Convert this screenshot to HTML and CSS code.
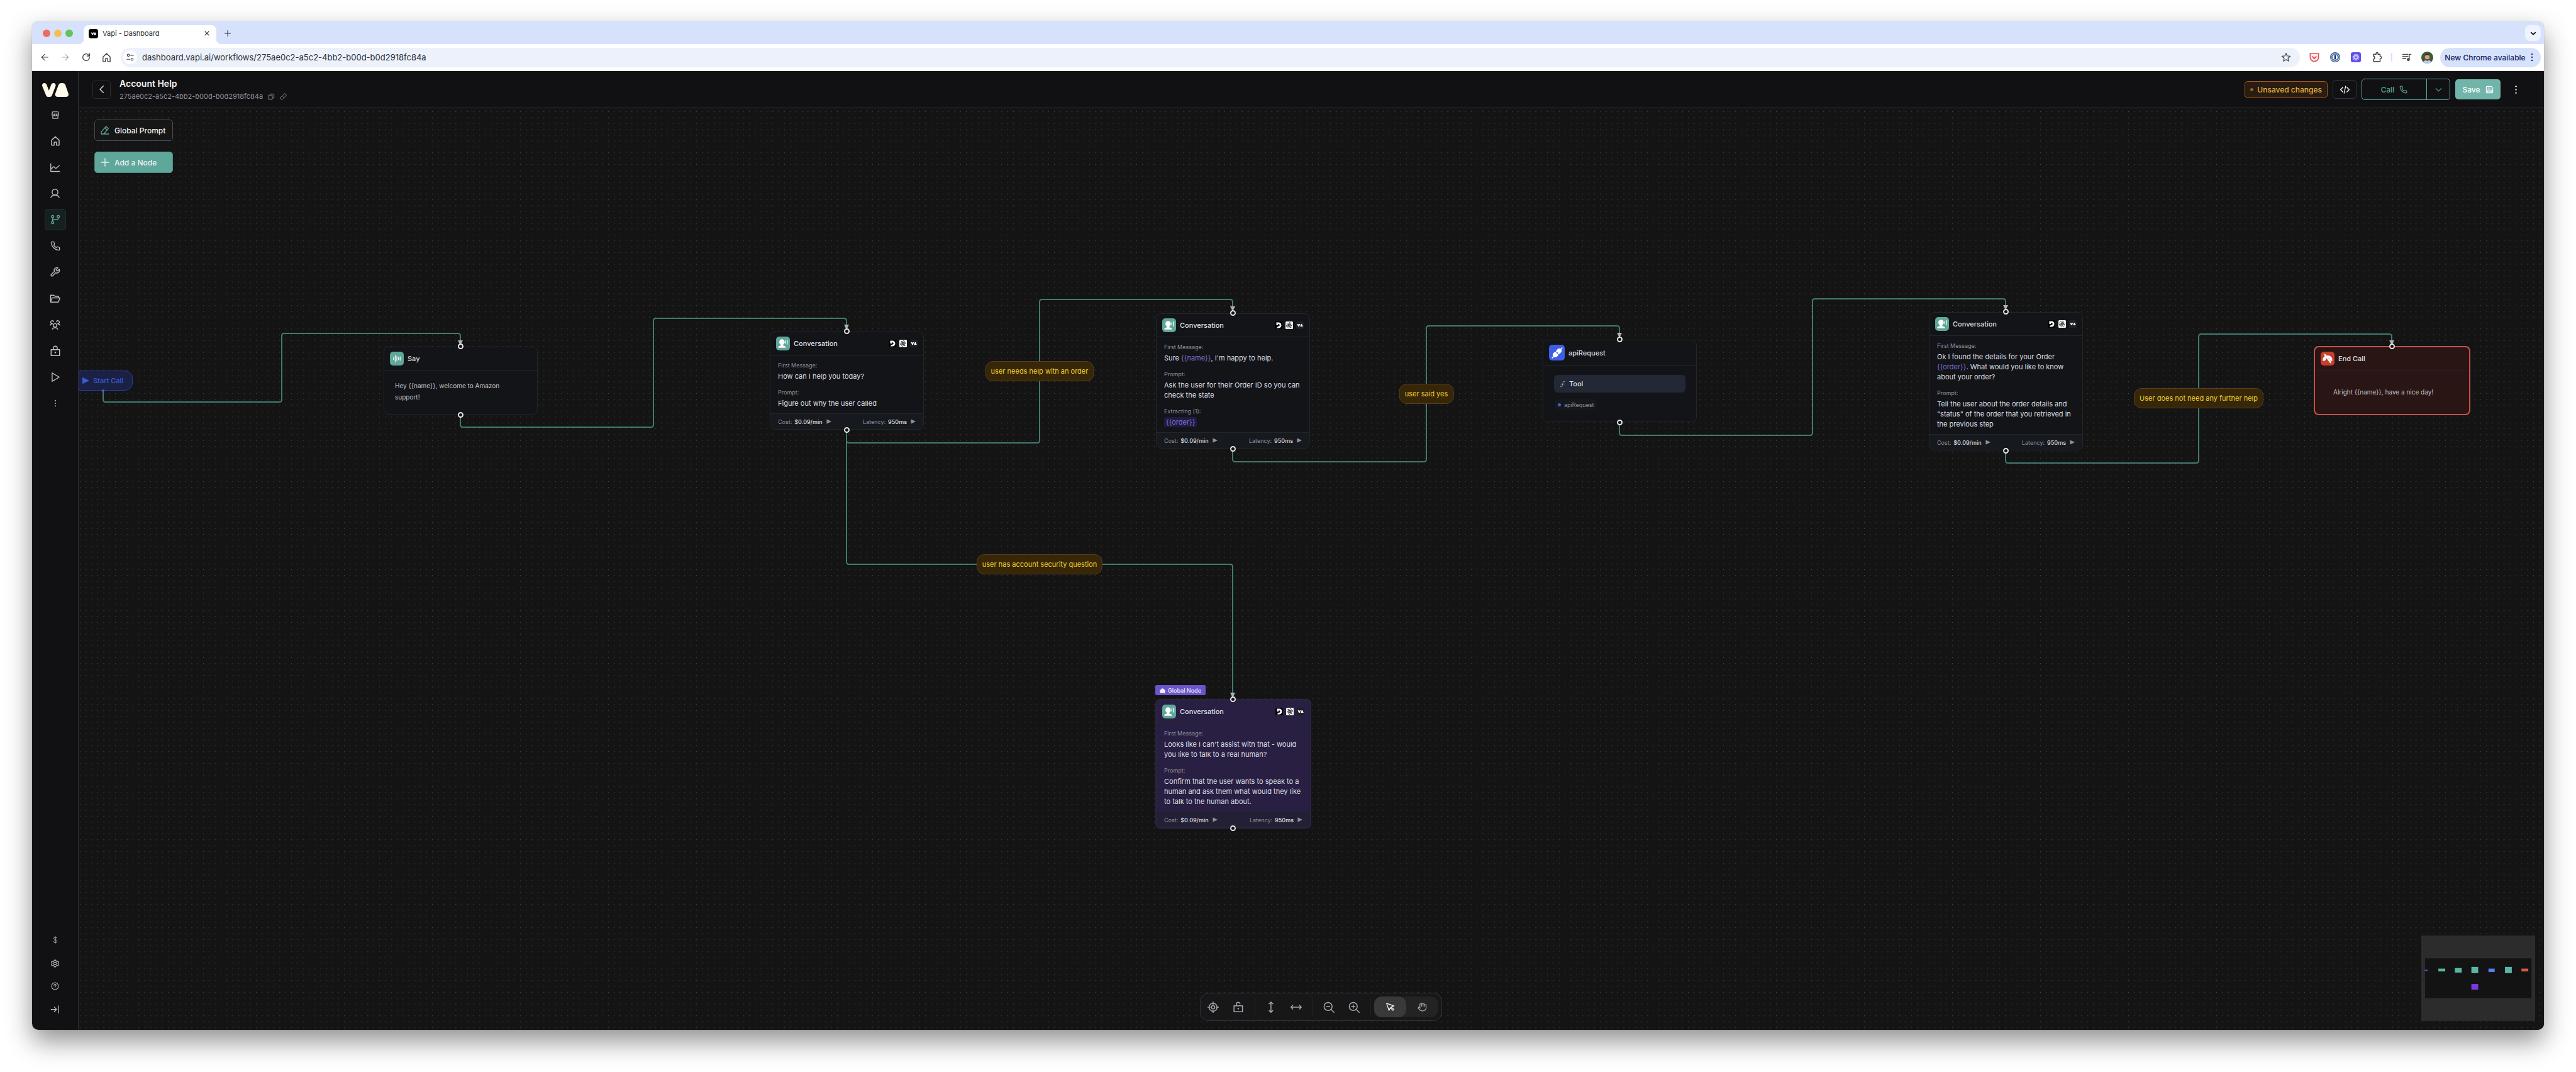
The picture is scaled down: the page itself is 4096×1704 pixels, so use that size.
FILE: index.html
```html
<!DOCTYPE html>
<html lang="en">
<head>
<meta charset="utf-8">
<title>Vapi - Dashboard</title>
<meta name="viewport" content="width=device-width, initial-scale=1">
<link rel="stylesheet" href="styles.css">
</head>
<body>
<svg class="sprite" aria-hidden="true">
  <symbol id="i-back" viewBox="0 0 24 24"><path d="M21 12H4M12 4l-8 8 8 8"/></symbol>
  <symbol id="i-forward" viewBox="0 0 24 24"><path d="M3 12h17M12 4l8 8-8 8"/></symbol>
  <symbol id="i-reload" viewBox="0 0 24 24"><path d="M20 12a8 8 0 1 1-2.5-5.8L20 8.500M20 3v6h-6"/></symbol>
  <symbol id="i-home" viewBox="0 0 24 24"><path d="M4 21V10.500L12 3l8 7.500V21h-5.500v-6.500h-5V21z"/></symbol>
  <symbol id="i-tune" viewBox="0 0 24 24"><circle cx="7" cy="6.500" r="3"/><path d="M13 6.500h8M3 17.500h8"/><circle cx="17" cy="17.500" r="3"/></symbol>
  <symbol id="i-star" viewBox="0 0 24 24"><path d="M12 2.500l2.900 6.400 7 .7-5.300 4.700 1.500 6.900-6.100-3.600-6.100 3.600 1.500-6.900-5.300-4.700 7-.7z"/></symbol>
  <symbol id="i-puzzle" viewBox="0 0 24 24"><path d="M4 5.500h5.500V4a2 2 0 0 1 4 0v1.500H18v5h1a2 2 0 0 1 0 4.500h-1v6H4v-5c3.500 0 3.500-6 0-6z"/></symbol>
  <symbol id="i-queue" viewBox="0 0 24 24"><path d="M2 5h13M2 10h13M2 15h8M18 17V5h4"/><circle cx="15.500" cy="17.500" r="2.500" fill="currentColor"/></symbol>
  <symbol id="i-close" viewBox="0 0 24 24"><path d="M5 5l14 14M19 5L5 19"/></symbol>
  <symbol id="i-plus" viewBox="0 0 24 24"><path d="M12 3v18M3 12h18"/></symbol>
  <symbol id="i-down" viewBox="0 0 24 24"><path d="M4 8.500l8 8 8-8"/></symbol>
  <symbol id="i-left" viewBox="0 0 24 24"><path d="M15.500 4l-8 8 8 8"/></symbol>
  <symbol id="i-dots" viewBox="0 0 24 24"><g fill="currentColor" stroke="none"><circle cx="12" cy="3.500" r="2"/><circle cx="12" cy="12" r="2"/><circle cx="12" cy="20.500" r="2"/></g></symbol>
  <symbol id="i-va" viewBox="0 0 42 22"><g fill="currentColor" stroke="none"><path d="M0 3.600C0 1.500 1.600 0 3.600 0 5.300 0 6.500.9 7.100 2.600L10.800 12 14.400 2.600C15 .9 16.200 0 17.900 0 20.500 0 22.200 2.200 21.400 4.800L15.700 19.400C15 21.200 13.600 22 11.600 22H10.200C8.300 22 6.900 21.200 6.200 19.400L.3 5.200C.1 4.700 0 4.200 0 3.600z"/><path d="M20.900 16.800L26 3C26.800 1 28.500 0 30.800 0H32.200C34.500 0 36.200 1 37 3L41.700 16.800C42.600 19.600 41 22 38 22H24.500C21.600 22 20 19.600 20.900 16.800z"/></g></symbol>
  <symbol id="i-store" viewBox="0 0 24 24"><path d="M3 9l1.500-6h15L21 9M3 9h18M3 9v2a3 3 0 0 0 6 0 3 3 0 0 0 6 0 3 3 0 0 0 6 0V9M5 14v7h14v-7M9 9v2M15 9v2"/></symbol>
  <symbol id="i-chart" viewBox="0 0 24 24"><path d="M2.500 3v17.500h19.500M2.500 16l5.500-5.500c2-2 3 1.500 4.500 2.500s2.500 0 3.500-1l5.500-4.500"/></symbol>
  <symbol id="i-user" viewBox="0 0 24 24"><circle cx="12" cy="9" r="6.500"/><path d="M2.500 21c2-3.500 5-5.500 9.500-5.500s7.500 2 9.500 5.500"/></symbol>
  <symbol id="i-branch" viewBox="0 0 24 24"><circle cx="5.500" cy="5" r="2.800"/><circle cx="5.500" cy="19" r="2.800"/><circle cx="19" cy="5" r="2.800"/><path d="M5.500 8v8M5.500 12h10.500a3 3 0 0 0 3-3V8"/></symbol>
  <symbol id="i-phone" viewBox="0 0 24 24"><path d="M22 16.920v3a2 2 0 0 1-2.180 2 19.790 19.790 0 0 1-8.630-3.070 19.500 19.500 0 0 1-6-6 19.790 19.790 0 0 1-3.070-8.670A2 2 0 0 1 4.110 2h3a2 2 0 0 1 2 1.720 12.840 12.840 0 0 0 .7 2.810 2 2 0 0 1-.45 2.110L8.090 9.910a16 16 0 0 0 6 6l1.270-1.270a2 2 0 0 1 2.110-.45 12.840 12.840 0 0 0 2.810.7A2 2 0 0 1 22 16.920z"/></symbol>
  <symbol id="i-wrench" viewBox="0 0 24 24"><path d="M14.700 6.300a1 1 0 0 0 0 1.400l1.600 1.600a1 1 0 0 0 1.400 0l3.770-3.770a6 6 0 0 1-7.940 7.940l-6.910 6.910a2.120 2.120 0 0 1-3-3l6.910-6.910a6 6 0 0 1 7.940-7.940l-3.760 3.760z"/></symbol>
  <symbol id="i-folder" viewBox="0 0 24 24"><path d="M2 20V4.500h7l3 2.500h8v3.500M2 20l3.500-9.500H23L19.500 20z"/></symbol>
  <symbol id="i-group" viewBox="0 0 24 24"><circle cx="12" cy="13" r="4"/><path d="M6 21.500a7 7 0 0 1 12 0M1 12.500a6 6 0 0 1 5-3 3.500 3.500 0 1 1 3-5M23 12.500a6 6 0 0 0-5-3 3.500 3.500 0 1 0-3-5"/></symbol>
  <symbol id="i-lock" viewBox="0 0 24 24"><path d="M3 9h18v12.500H3zM8 9V5.500a4 4 0 0 1 8 0V9"/><circle cx="12" cy="15" r=".8" fill="currentColor"/></symbol>
  <symbol id="i-unlock" viewBox="0 0 24 24"><path d="M3 9h18v12.500H3zM8 9V5.500a4 4 0 0 1 7.800-1"/><circle cx="12" cy="15" r=".8" fill="currentColor"/></symbol>
  <symbol id="i-play" viewBox="0 0 24 24"><path d="M5.500 2.500l16 9.500-16 9.500z"/></symbol>
  <symbol id="i-tri" viewBox="0 0 24 24"><path fill="currentColor" d="M3 3l19 9-19 9z"/></symbol>
  <symbol id="i-dollar" viewBox="0 0 24 24"><path d="M12 1.500v21M17 7c0-5-10-5-10 0s10 4.500 10 10-10 5-10 0"/></symbol>
  <symbol id="i-gear" viewBox="0 0 24 24"><circle cx="12" cy="12" r="4"/><path d="M10 2h4l1 3 3 1.500 3-1 2 3.500-2.500 3 2.500 3-2 3.500-3-1L15 19l-1 3h-4l-1-3-3-1.500-3 1L1 15l2.500-3L1 9l2-3.500 3 1L9 5z"/></symbol>
  <symbol id="i-help" viewBox="0 0 24 24"><circle cx="12" cy="12" r="10"/><path d="M9 9.500c0-4 6-4 6 0 0 2-3 2-3 4.500M12 17v1"/></symbol>
  <symbol id="i-expand" viewBox="0 0 24 24"><path d="M2 12h14M10 6l6 6-6 6M21 3v18"/></symbol>
  <symbol id="i-copy" viewBox="0 0 24 24"><path d="M3 7h12v15H3zM8 3h13v14h-5"/></symbol>
  <symbol id="i-link" viewBox="0 0 24 24"><path d="M10 13a5 5 0 0 0 7.540.54l3-3a5 5 0 0 0-7.070-7.070l-1.720 1.710M14 11a5 5 0 0 0-7.540-.54l-3 3a5 5 0 0 0 7.070 7.070l1.710-1.710"/></symbol>
  <symbol id="i-code" viewBox="0 0 24 24"><path d="M7 6l-6 6 6 6M17 6l6 6-6 6M14 3l-4 18"/></symbol>
  <symbol id="i-save" viewBox="0 0 24 24"><path d="M2.500 4.500a2 2 0 0 1 2-2h13l4 4v13a2 2 0 0 1-2 2h-15a2 2 0 0 1-2-2zM7 21v-8h10v8M7 7.500h7M10 17h4"/></symbol>
  <symbol id="i-edit" viewBox="0 0 24 24"><path d="M3 21h18M3 21v-5L14.500 3l5.500 5-11 13M11.500 6.500l5.500 5"/></symbol>
  <symbol id="i-wave" viewBox="0 0 24 24"><path d="M3 9v6M7.500 3v18M12 6v12M16.500 9v6M21 7v10"/></symbol>
  <symbol id="i-talk" viewBox="0 0 24 24"><g fill="currentColor" stroke="none"><circle cx="9.500" cy="8.500" r="6.500"/><path d="M6.500 13h6v4l6 2.500V22H.5v-2.500l6-2.500z"/></g><path d="M18.500 5.500v6M22 3.500v10"/></symbol>
  <symbol id="i-plug" viewBox="0 0 24 24"><path d="M1.500 22.500l4-4M22.500 1.500l-4 4M9.500 10.500l2-2M13.500 14.500l2-2"/><g fill="currentColor"><path d="M7.500 10.500l6 6-3 3c-2.500 1.500-5.500.5-6.500-1.500-1-2-.5-3.500.5-4.500z"/><path d="M11 7.500l5.500 5.500 3-3c1.500-2.500.5-5-1-6-2-1-3.500-.5-4.500.5z"/></g></symbol>
  <symbol id="i-hangup" viewBox="0 0 24 24"><path fill="currentColor" stroke="none" d="M.5 16C.5 9 5 4.500 12 4.500S23.500 9 23.500 16c0 1.500-1.500 2-3 1.500l-4-2v-3c-2-2-7-2-9 0v3l-4 2C2 18 .5 17.500.5 16z"/><path class="slash" d="M6 2l14 19"/><path d="M4 2l14.500 20"/></symbol>
  <symbol id="i-func" viewBox="0 0 24 24"><path d="M20 3h-2.500c-2.500 0-3.500 1.500-4 4l-2 10c-.5 2.500-1.500 4-4 4H5M6 12h12"/></symbol>
  <symbol id="i-chip-home" viewBox="0 0 24 24"><path fill="currentColor" d="M2 22V11l10-8 10 8v11z"/></symbol>
  <symbol id="i-locate" viewBox="0 0 24 24"><circle cx="12" cy="12" r="8.500"/><circle cx="12" cy="12" r="3.500"/><path d="M12 .5v5M12 18.500v5M.5 12h5M18.500 12h5"/></symbol>
  <symbol id="i-vert" viewBox="0 0 24 24"><path d="M12 1v22M8 5l4-4 4 4M8 19l4 4 4-4"/></symbol>
  <symbol id="i-horiz" viewBox="0 0 24 24"><path d="M1 12h22M5 8l-4 4 4 4M19 8l4 4-4 4"/></symbol>
  <symbol id="i-zoomout" viewBox="0 0 24 24"><circle cx="10.500" cy="10.500" r="8.500"/><path d="M17 17l6 6M7 10.500h7"/></symbol>
  <symbol id="i-zoomin" viewBox="0 0 24 24"><circle cx="10.500" cy="10.500" r="8.500"/><path d="M17 17l6 6M7 10.500h7M10.500 7v7"/></symbol>
  <symbol id="i-cursor" viewBox="0 0 24 24"><path d="M3 3l6 18 3.500-7 6.500 7 2.500-2.500-7-6 7-3z"/></symbol>
  <symbol id="i-hand" viewBox="0 0 24 24"><path d="M18 11V6a2 2 0 0 0-4 0M14 10V4a2 2 0 0 0-4 0v2M10 10.500V6a2 2 0 0 0-4 0v8M18 8a2 2 0 1 1 4 0v6a8 8 0 0 1-8 8h-2c-2.800 0-4.500-.9-6-2.300l-3.600-3.600a2 2 0 0 1 2.800-2.800L7 15"/></symbol>
  <symbol id="m-deepgram" viewBox="0 0 24 24"><rect width="24" height="24" rx="5" fill="#000"/><path fill="#fff" d="M5 3h7a9 9 0 0 1 0 18H5l5-5.500h2a3.500 3.500 0 0 0 0-7h-2V12H5z"/></symbol>
  <symbol id="m-openai" viewBox="0 0 24 24"><rect width="24" height="24" rx="3" fill="#fff"/><g fill="none" stroke="#111" stroke-width="1.500"><path d="M12 2.500a4.500 4.500 0 0 1 4.500 3v6.500L11 15.200"/><path d="M12 2.500a4.500 4.500 0 0 1 4.500 3v6.500L11 15.200" transform="rotate(60 12 12)"/><path d="M12 2.500a4.500 4.500 0 0 1 4.500 3v6.500L11 15.200" transform="rotate(120 12 12)"/><path d="M12 2.500a4.500 4.500 0 0 1 4.500 3v6.500L11 15.200" transform="rotate(180 12 12)"/><path d="M12 2.500a4.500 4.500 0 0 1 4.500 3v6.500L11 15.200" transform="rotate(240 12 12)"/><path d="M12 2.500a4.500 4.500 0 0 1 4.500 3v6.500L11 15.200" transform="rotate(300 12 12)"/></g></symbol>
  <symbol id="m-vapi" viewBox="0 0 24 24"><rect width="24" height="24" rx="5" fill="#1e2125"/><path fill="#fff" d="M3 8h3.500l1.500 3 1.500-3h3L9.500 16h-3zM12.500 16l3-8h2.500l3.500 8z"/></symbol>
</svg>

<main class="window">
  <div class="tabs">
    <div class="lights"><i class="red"></i><i class="yellow"></i><i class="green"></i></div>
    <div class="tab">
      <span class="favicon"><svg><use href="#i-va"/></svg></span>
      <span class="tab-title">Vapi - Dashboard</span>
      <button class="tab-close" aria-label="Close tab"><svg class="icon s10"><use href="#i-close"/></svg></button>
    </div>
    <button class="tab-new" aria-label="New tab"><svg class="icon s12"><use href="#i-plus"/></svg></button>
    <button class="tab-search" aria-label="Search tabs"><svg class="icon s10 bold"><use href="#i-down"/></svg></button>
  </div>

  <div class="toolbar">
    <button aria-label="Back"><svg class="icon s14"><use href="#i-back"/></svg></button>
    <button aria-label="Forward" class="off"><svg class="icon s14"><use href="#i-forward"/></svg></button>
    <button aria-label="Reload"><svg class="icon s16"><use href="#i-reload"/></svg></button>
    <button aria-label="Home"><svg class="icon s17"><use href="#i-home"/></svg></button>
    <div class="omnibox">
      <button class="site-info" aria-label="Site information"><svg class="icon s14"><use href="#i-tune"/></svg></button>
      <input class="url" aria-label="Address" value="dashboard.vapi.ai/workflows/275ae0c2-a5c2-4bb2-b00d-b0d2918fc84a">
      <button class="fav" aria-label="Bookmark this page"><svg class="icon s16"><use href="#i-star"/></svg></button>
    </div>
    <div class="extensions">
      <button aria-label="Pocket"><svg class="s16 plain" viewBox="0 0 24 24"><path d="M2 3h20v9a10 10 0 0 1-20 0z" fill="#fde8ea" stroke="#e2555f" stroke-width="2.500"/><path d="M7 10l5 5 5-5" fill="none" stroke="#e2555f" stroke-width="3"/></svg></button>
      <button aria-label="1Password"><svg class="s16 plain" viewBox="0 0 24 24"><circle cx="12" cy="12" r="11" fill="#fff" stroke="#555" stroke-width="2"/><circle cx="12" cy="12" r="7.500" fill="#fff" stroke="#3b82e6" stroke-width="3.500"/><path d="M12 7v10" stroke="#222" stroke-width="3.500"/></svg></button>
      <button aria-label="Loom"><svg class="s16 plain" viewBox="0 0 24 24"><rect width="24" height="24" rx="5" fill="#5f50ec"/><path d="M12 4v16M4 12h16M6.300 6.300l11.400 11.400M17.700 6.300L6.300 17.700M8.900 4.600l6.200 14.800M15.100 4.600L8.900 19.400M4.600 8.900l14.800 6.200M19.400 8.900L4.600 15.100" stroke="#fff" stroke-width="1.300"/><circle cx="12" cy="12" r="2.600" fill="#5f50ec"/></svg></button>
      <button aria-label="Extensions"><svg class="icon s18"><use href="#i-puzzle"/></svg></button>
    </div>
    <span class="divider"></span>
    <button class="media" aria-label="Media controls"><svg class="icon s16"><use href="#i-queue"/></svg></button>
    <button class="avatar" aria-label="Profile"><svg viewBox="0 0 20 20"><rect width="20" height="20" fill="#3c5a34"/><path d="M3 20c0-4 3-6 7-6s7 2 7 6z" fill="#b9c9ee"/><ellipse cx="10" cy="9.500" rx="4" ry="5.200" fill="#d3a184"/><path d="M6 11c1 6 7 6 8 0l-2 1.500H8z" fill="#6b4531"/><path d="M5.800 8c0-6 8.400-6 8.400 0l-1-2H7z" fill="#3b2a20"/></svg></button>
    <button class="update">New Chrome available <svg class="icon s14"><use href="#i-dots"/></svg></button>
  </div>

  <div class="app">
    <aside class="sidebar">
      <a class="logo" href="#" aria-label="Vapi"><svg><use href="#i-va"/></svg></a>
      <nav class="nav" aria-label="Main">
        <a href="#" aria-label="Store"><svg class="icon s14"><use href="#i-store"/></svg></a>
        <a href="#" aria-label="Overview"><svg class="icon s18"><use href="#i-home"/></svg></a>
        <a href="#" aria-label="Metrics"><svg class="icon s17"><use href="#i-chart"/></svg></a>
        <a href="#" aria-label="Assistants"><svg class="icon s17"><use href="#i-user"/></svg></a>
        <a href="#" aria-label="Workflows" class="active"><svg class="icon s16"><use href="#i-branch"/></svg></a>
        <a href="#" aria-label="Phone numbers"><svg class="icon s16"><use href="#i-phone"/></svg></a>
        <a href="#" aria-label="Tools"><svg class="icon s17"><use href="#i-wrench"/></svg></a>
        <a href="#" aria-label="Files"><svg class="icon s17"><use href="#i-folder"/></svg></a>
        <a href="#" aria-label="Squads"><svg class="icon s17"><use href="#i-group"/></svg></a>
        <a href="#" aria-label="Keys"><svg class="icon s18"><use href="#i-lock"/></svg></a>
        <a href="#" aria-label="Tests"><svg class="icon s17"><use href="#i-play"/></svg></a>
        <a href="#" aria-label="More"><svg class="icon s12"><use href="#i-dots"/></svg></a>
      </nav>
      <nav class="nav-foot" aria-label="Account">
        <a href="#" aria-label="Billing"><svg class="icon s12"><use href="#i-dollar"/></svg></a>
        <a href="#" aria-label="Settings"><svg class="icon s13"><use href="#i-gear"/></svg></a>
        <a href="#" aria-label="Help"><svg class="icon s13"><use href="#i-help"/></svg></a>
        <a href="#" aria-label="Expand"><svg class="icon s15"><use href="#i-expand"/></svg></a>
      </nav>
    </aside>

    <section class="main">
      <header class="header">
        <button class="back" aria-label="Back to workflows"><svg class="icon s16"><use href="#i-left"/></svg></button>
        <div class="heading">
          <h1>Account Help</h1>
          <p>275ae0c2-a5c2-4bb2-b00d-b0d2918fc84a
            <button aria-label="Copy id"><svg class="icon s11"><use href="#i-copy"/></svg></button>
            <button aria-label="Copy link"><svg class="icon s11"><use href="#i-link"/></svg></button></p>
        </div>
        <div class="actions">
          <span class="unsaved"><i></i>Unsaved changes</span>
          <button class="code" aria-label="View code"><svg class="icon s15"><use href="#i-code"/></svg></button>
          <div class="call">
            <button class="call-main">Call <svg class="icon s13"><use href="#i-phone"/></svg></button>
            <button class="call-more" aria-label="Call options"><svg class="icon s13"><use href="#i-down"/></svg></button>
          </div>
          <button class="save">Save <svg class="icon s13"><use href="#i-save"/></svg></button>
          <button class="more" aria-label="More options"><svg class="icon s15"><use href="#i-dots"/></svg></button>
        </div>
      </header>

      <div class="canvas">
        <svg class="board" aria-hidden="true">
          <defs>
            <pattern id="dots" width="28" height="28" patternUnits="userSpaceOnUse" patternTransform="translate(2 5) scale(.3333)"><rect width="3" height="3" fill="#525252"/></pattern>
          </defs>
          <rect width="100%" height="100%" fill="url(#dots)"/>
          <g class="edges">
            <path d="M39 450V463q0 4 4 4H319q4 0 4-4V362q0-4 4-4H603q4 0 4 4V371"/>
            <path d="M607 490V503q0 4 4 4H910q4 0 4-4V338q0-4 4-4H1217q4 0 4 4V346"/>
            <path d="M1221 514V528q0 4 4 4H1524q4 0 4-4V308q0-4 4-4H1831q4 0 4 4V316"/>
            <path d="M1221 514V721q0 4 4 4H1831q4 0 4 4V931"/>
            <path d="M1835 544V558q0 4 4 4H2139q4 0 4-4V350q0-4 4-4H2446q4 0 4 4V359"/>
            <path d="M2450 502V516q0 4 4 4H2753q4 0 4-4V307q0-4 4-4H3060q4 0 4 4V315"/>
            <path d="M3064 545V560q0 4 4 4H3367q4 0 4-4V363q0-4 4-4H3674q4 0 4 4V370"/>
          </g>
          <g class="arrows">
            <path d="M603 369h8l-4 8zM1217 344h8l-4 8zM1831 315h8l-4 8zM2446 357h8l-4 8zM3060 313h8l-4 8zM3674 369h8l-4 8zM1831 929h8l-4 8z"/>
          </g>
        </svg>

        <div class="panel">
          <button class="global-prompt"><svg class="icon s16"><use href="#i-edit"/></svg>Global Prompt</button>
          <button class="add-node"><svg class="icon s16"><use href="#i-plus"/></svg>Add a Node</button>
        </div>

        <div class="start"><svg class="icon s12"><use href="#i-tri"/></svg>Start Call<i></i></div>

        <article class="node say">
          <i class="port in"></i>
          <header><span class="badge"><svg class="icon s14"><use href="#i-wave"/></svg></span><h2>Say</h2></header>
          <p class="speech">Hey {{name}}, welcome to Amazon<br>support!</p>
          <i class="port out"></i>
        </article>

        <article class="node conv-help">
          <i class="port in"></i>
          <header><span class="badge"><svg class="icon s16"><use href="#i-talk"/></svg></span><h2>Conversation</h2>
            <span class="models"><svg><use href="#m-deepgram"/></svg><svg><use href="#m-openai"/></svg><svg><use href="#m-vapi"/></svg></span></header>
          <dl>
            <dt>First Message:</dt><dd>How can I help you today?</dd>
            <dt>Prompt:</dt><dd>Figure out why the user called</dd>
          </dl>
          <footer><button>Cost: <b>$0.09/min</b><svg class="icon"><use href="#i-tri"/></svg></button><button>Latency: <b>950ms</b><svg class="icon"><use href="#i-tri"/></svg></button></footer>
          <i class="port out"></i>
        </article>

        <article class="node conv-order">
          <i class="port in"></i>
          <header><span class="badge"><svg class="icon s16"><use href="#i-talk"/></svg></span><h2>Conversation</h2>
            <span class="models"><svg><use href="#m-deepgram"/></svg><svg><use href="#m-openai"/></svg><svg><use href="#m-vapi"/></svg></span></header>
          <dl>
            <dt>First Message:</dt><dd>Sure <em>{{name}}</em>, I'm happy to help.</dd>
            <dt>Prompt:</dt><dd>Ask the user for their Order ID so you can<br>check the state</dd>
            <dt>Extracting (1):</dt><dd><em class="chip">{{order}}</em></dd>
          </dl>
          <footer><button>Cost: <b>$0.09/min</b><svg class="icon"><use href="#i-tri"/></svg></button><button>Latency: <b>950ms</b><svg class="icon"><use href="#i-tri"/></svg></button></footer>
          <i class="port out"></i>
        </article>

        <article class="node api">
          <i class="port in"></i>
          <header><span class="badge"><svg class="icon s18"><use href="#i-plug"/></svg></span><h2>apiRequest</h2></header>
          <div class="tool-body">
            <div class="tool"><svg class="icon s11"><use href="#i-func"/></svg>Tool</div>
            <span class="tool-tag"><i></i>apiRequest</span>
          </div>
          <i class="port out"></i>
        </article>

        <article class="node conv-details">
          <i class="port in"></i>
          <header><span class="badge"><svg class="icon s16"><use href="#i-talk"/></svg></span><h2>Conversation</h2>
            <span class="models"><svg><use href="#m-deepgram"/></svg><svg><use href="#m-openai"/></svg><svg><use href="#m-vapi"/></svg></span></header>
          <dl>
            <dt>First Message:</dt><dd>Ok I found the details for your Order<br><em>{{order}}</em>. What would you like to know<br>about your order?</dd>
            <dt>Prompt:</dt><dd>Tell the user about the order details and<br>"status" of the order that you retrieved in<br>the previous step</dd>
          </dl>
          <footer><button>Cost: <b>$0.09/min</b><svg class="icon"><use href="#i-tri"/></svg></button><button>Latency: <b>950ms</b><svg class="icon"><use href="#i-tri"/></svg></button></footer>
          <i class="port out"></i>
        </article>

        <article class="node end">
          <i class="port in"></i>
          <header><span class="badge"><svg class="icon s16"><use href="#i-hangup"/></svg></span><h2>End Call</h2></header>
          <p class="speech">Alright {{name}}, have a nice day!</p>
        </article>

        <article class="node conv-global">
          <span class="global-tag"><svg class="icon s9"><use href="#i-chip-home"/></svg>Global Node</span>
          <i class="port in"></i>
          <header><span class="badge"><svg class="icon s16"><use href="#i-talk"/></svg></span><h2>Conversation</h2>
            <span class="models"><svg><use href="#m-deepgram"/></svg><svg><use href="#m-openai"/></svg><svg><use href="#m-vapi"/></svg></span></header>
          <dl>
            <dt>First Message:</dt><dd>Looks like I can't assist with that - would<br>you like to talk to a real human?</dd>
            <dt>Prompt:</dt><dd>Confirm that the user wants to speak to a<br>human and ask them what would they like<br>to talk to the human about.</dd>
          </dl>
          <footer><button>Cost: <b>$0.09/min</b><svg class="icon"><use href="#i-tri"/></svg></button><button>Latency: <b>950ms</b><svg class="icon"><use href="#i-tri"/></svg></button></footer>
          <i class="port out"></i>
        </article>

        <div class="cond cond-order">user needs help with an order</div>
        <div class="cond cond-yes">user said yes</div>
        <div class="cond cond-done">User does not need any further help</div>
        <div class="cond cond-security">user has account security question</div>

        <div class="tools" role="toolbar" aria-label="Canvas tools">
          <button aria-label="Center"><svg class="icon s18"><use href="#i-locate"/></svg></button>
          <button aria-label="Unlock"><svg class="icon s18"><use href="#i-unlock"/></svg></button>
          <span></span>
          <button aria-label="Vertical layout"><svg class="icon s18"><use href="#i-vert"/></svg></button>
          <button aria-label="Horizontal layout"><svg class="icon s18"><use href="#i-horiz"/></svg></button>
          <span></span>
          <button aria-label="Zoom out"><svg class="icon s18"><use href="#i-zoomout"/></svg></button>
          <button aria-label="Zoom in"><svg class="icon s18"><use href="#i-zoomin"/></svg></button>
          <span></span>
          <div class="modes">
            <button class="on" aria-label="Select"><svg class="icon s15"><use href="#i-cursor"/></svg></button>
            <button aria-label="Pan"><svg class="icon s15"><use href="#i-hand"/></svg></button>
          </div>
        </div>

        <svg class="minimap" viewBox="0 0 600 450" aria-label="Minimap">
          <rect width="600" height="450" fill="#2c2c2c"/>
          <rect x="20" y="120" width="561" height="210" fill="#131313"/>
          <g fill="#5bb5a6"><rect x="90" y="174" width="36" height="15"/><rect x="177" y="171" width="36" height="24"/><rect x="264" y="165" width="36" height="33"/><rect x="441" y="165" width="36" height="33"/></g>
          <rect x="18" y="180" width="15" height="6" fill="#4164e3"/>
          <rect x="354" y="174" width="33" height="18" fill="#5180f0"/>
          <rect x="528" y="174" width="36" height="15" fill="#dd574c"/>
          <rect x="264" y="255" width="36" height="30" fill="#773ae4"/>
        </svg>
      </div>
    </section>
  </div>
</main>
</body>
</html>
```
FILE: styles.css
```css
:root {
  --teal: #5ea79b;
  --line: #2e3035;
  --panel: #111114;
  --card: #121418;
  --card-line: #22252a;
  --muted: #90929a;
  --text: #dedfe2;
  --violet: #7f6fd0;
}

* { box-sizing: border-box; }

body {
  display: flex;
  min-height: 100vh;
  margin: 0;
  padding: 34px 51px 67px;
  background: #fff;
  font-family: Inter, "Liberation Sans", sans-serif;
  color: var(--text);
}

button {
  display: inline-flex;
  align-items: center;
  justify-content: center;
  margin: 0;
  padding: 0;
  border: 0;
  background: none;
  color: inherit;
  font: inherit;
}

h1, h2, p, dl, dd { margin: 0; font-weight: inherit; }
a { color: inherit; }

.sprite { position: absolute; width: 0; height: 0; }

.icon {
  flex: none;
  fill: none;
  stroke: currentColor;
  stroke-width: 2;
  stroke-linejoin: round;
  stroke-linecap: round;
}
.bold { stroke-width: 4; }
.plain { display: block; }
.s9 { width: 9px; height: 9px; }
.s10 { width: 10px; height: 10px; }
.s11 { width: 11px; height: 11px; }
.s12 { width: 12px; height: 12px; }
.s13 { width: 13px; height: 13px; }
.s14 { width: 14px; height: 14px; }
.s15 { width: 15px; height: 15px; }
.s16 { width: 16px; height: 16px; }
.s17 { width: 17px; height: 17px; }
.s18 { width: 18px; height: 18px; }

/* Browser window */
.window {
  display: flex;
  flex: 1;
  flex-direction: column;
  min-width: 0;
  overflow: hidden;
  border-radius: 10px;
  background: #fff;
  box-shadow: 0 0 1px rgba(0, 0, 0, .6), 0 18px 40px rgba(0, 0, 0, .44);
}

.tabs {
  display: flex;
  height: 36px;
  padding: 6px 5px 0 17px;
  background: #d6e1fc;
  color: #2c2e33;
}
.lights { display: flex; align-items: center; gap: 6px; width: 65px; height: 26px; }
.lights i { width: 12px; height: 12px; border-radius: 50%; }
.red { background: #ed6b5f; }
.yellow { background: #f5bf4f; }
.green { background: #61c454; }

.tab {
  display: flex;
  align-items: center;
  position: relative;
  width: 211px;
  height: 30px;
  padding: 0 8px 4px;
  border-radius: 8px 8px 0 0;
  background: #fff;
  font-size: 11px;
}
.tab::before, .tab::after {
  content: "";
  position: absolute;
  bottom: 0;
  width: 8px;
  height: 8px;
}
.tab::before { left: -8px; background: radial-gradient(circle at 0 0, transparent 8px, #fff 8px); }
.tab::after { right: -8px; background: radial-gradient(circle at 100% 0, transparent 8px, #fff 8px); }
.favicon {
  display: grid;
  place-items: center;
  width: 15px;
  height: 15px;
  border-radius: 4px;
  background: #000;
  color: #fff;
}
.favicon svg { width: 8px; height: 5px; }
.tab-title { flex: 1; padding-left: 7px; }
.tab-close { width: 14px; height: 14px; }
.tab-close svg { stroke-width: 3; }
.tab-new { width: 35px; height: 26px; }
.tab-search {
  width: 25px;
  height: 25px;
  margin-left: auto;
  border-radius: 8px;
  background: #eef3fd;
  color: #111;
}

.toolbar {
  display: flex;
  align-items: center;
  height: 43px;
  padding: 0 5px 0 3px;
  border-bottom: 1px solid #dfe1e4;
  background: #fff;
  color: #47494d;
}
.toolbar > button { width: 33px; height: 30px; }
.off { color: #a9abae; }
.omnibox {
  display: flex;
  flex: 1;
  align-items: center;
  height: 31px;
  margin-left: 6px;
  padding: 0 14px 0 4px;
  border-radius: 16px;
  background: #edf1fa;
}
.site-info { width: 22px; height: 22px; border-radius: 50%; background: #fff; }
.url {
  flex: 1;
  min-width: 0;
  margin-left: 8px;
  padding: 0;
  border: 0;
  background: none;
  color: #2b2d31;
  font: inherit;
  font-size: 13px;
}
.extensions { display: flex; gap: 17px; padding-left: 15px; }
.divider { width: 2px; height: 14px; margin: 0 6px 0 13px; background: #d6e1fc; }
.toolbar > .avatar { width: 19px; height: 19px; margin: 0 11px 0 7px; overflow: hidden; border-radius: 50%; }
.toolbar > .update {
  gap: 3px;
  width: 160px;
  height: 31px;
  border-radius: 16px;
  background: #d6e1fc;
  color: #12245b;
  font-size: 12px;
  font-weight: 500;
}

/* App shell */
.app { display: flex; flex: 1; min-height: 0; background: var(--panel); }
.sidebar {
  display: flex;
  flex-direction: column;
  align-items: center;
  width: 74px;
  padding: 19px 0 14px;
  border-right: 1px solid var(--line);
  color: #bcbec3;
}
.logo { height: 30px; color: #fff9ec; }
.logo svg { width: 42px; height: 22px; }
.nav { display: grid; grid-auto-rows: 1fr; height: 500px; }
.nav a, .nav-foot a { display: grid; place-items: center; width: 34px; }
.nav .active {
  align-self: center;
  height: 34px;
  border: 1px solid #1d302f;
  border-radius: 5px;
  background: #172021;
  color: var(--teal);
}
.nav-foot { display: grid; grid-auto-rows: 1fr; height: 147px; margin-top: auto; }

.main { display: flex; flex: 1; flex-direction: column; min-width: 0; }
.header {
  display: flex;
  align-items: center;
  height: 59px;
  padding: 0 29px 0 22px;
  border-bottom: 1px solid var(--line);
}
.back { width: 29px; height: 29px; border: 1px solid #2a2c31; border-radius: 5px; }
.heading { margin-left: 14px; }
.heading h1 { color: #f1f1f2; font-size: 14px; font-weight: 600; line-height: 22px; }
.heading p { display: flex; gap: 8px; color: var(--muted); font-size: 11px; line-height: 18px; }
.actions { display: flex; align-items: center; gap: 8px; margin-left: auto; font-size: 12px; font-weight: 500; }
.unsaved {
  display: flex;
  align-items: center;
  gap: 6px;
  height: 27px;
  padding: 0 8px;
  border: 1px solid #a3591c;
  border-radius: 5px;
  background: #2a1c12;
  color: #e3b43a;
}
.unsaved i { width: 5px; height: 5px; border-radius: 50%; background: #936222; }
.code { width: 38px; height: 30px; border: 1px solid #2f3541; border-radius: 5px; color: #fff; }
.call { display: flex; height: 34px; border: 1px solid var(--teal); border-radius: 5px; color: var(--teal); }
.call-main { gap: 8px; width: 102px; }
.call-more { width: 37px; border-left: 1px solid var(--teal); }
.save { gap: 8px; width: 72px; height: 32px; border-radius: 5px; background: #71b5aa; color: #fff; }
.more { width: 32px; }

/* Canvas */
.canvas { position: relative; flex: 1; overflow: hidden; background: #141414; }
.board { position: absolute; inset: 0; width: 100%; height: 100%; }
.edges { fill: none; stroke: #417a70; stroke-width: 2; }
.arrows { fill: #b1b1b7; }

.panel {
  display: flex;
  position: relative;
  flex-direction: column;
  gap: 17px;
  width: 125px;
  margin: 18px 25px;
  font-size: 12px;
  font-weight: 500;
}
.panel button {
  justify-content: flex-start;
  gap: 7px;
  height: 34px;
  padding: 0 8px;
  border: 1px solid #444b59;
  border-radius: 5px;
  background: #161616;
  color: #f1f1f2;
}
.panel .add-node { border-color: #4c8a83; background: var(--teal); }
.global-prompt svg { color: var(--teal); }

.start {
  display: flex;
  position: absolute;
  top: 417px;
  left: -8px;
  align-items: center;
  gap: 6px;
  width: 94px;
  height: 32px;
  padding: 0 12px;
  border: 1px solid #2a3c96;
  border-radius: 12px;
  background: #1a2145;
  color: #3d5bd8;
  font-size: 11px;
  font-weight: 500;
  white-space: nowrap;
}
.start i {
  position: absolute;
  bottom: -3px;
  left: 44px;
  width: 4px;
  height: 4px;
  border-radius: 50%;
  background: #4164e3;
}

.node {
  display: flex;
  position: absolute;
  flex-direction: column;
  width: 245px;
  border: 1px solid var(--card-line);
  border-radius: 8px;
  background: var(--card);
}
.say { top: 379px; left: 485px; height: 108px; }
.conv-help { top: 355px; left: 1099px; }
.conv-order { top: 326px; left: 1713px; }
.api { top: 368px; left: 2328px; height: 131px; }
.conv-details { top: 324px; left: 2942px; }
.end { top: 378px; left: 3554px; }
.conv-global { top: 939px; left: 1712px; }

.node header {
  display: flex;
  align-items: center;
  gap: 6px;
  height: 37px;
  padding: 0 9px;
  border-bottom: 1px solid var(--card-line);
}
.node h2 { flex: 1; font-size: 11px; font-weight: 500; }
.badge {
  display: grid;
  place-items: center;
  width: 22px;
  height: 22px;
  border-radius: 5px;
  background: var(--teal);
  color: #fff;
}
.models { display: flex; gap: 5px; }
.models svg { width: 12px; height: 12px; }

.speech { padding: 15px 17px; color: #c4c5c8; font-size: 10px; line-height: 18px; white-space: nowrap; }

.node dl { padding: 9px 12px 8px; white-space: nowrap; }
.node dt { color: var(--muted); font-size: 9px; line-height: 13px; }
.node dd { margin: 3px 0 11px; font-size: 11px; line-height: 16px; }
.node dd:last-child { margin-bottom: 0; }
.node em { color: var(--violet); font-style: normal; }
.node .chip { display: block; width: max-content; padding: 0 3px; border-radius: 3px; background: #1e1b42; }

.node footer {
  display: flex;
  justify-content: space-between;
  height: 25px;
  padding: 0 12px;
  border-top: 1px solid var(--card-line);
  border-radius: 0 0 7px 7px;
  background: rgba(28, 31, 36, .45);
  color: var(--muted);
  font-size: 9px;
}
.node footer b { margin-left: 4px; color: var(--text); font-weight: 500; }
.node footer svg { width: 8px; height: 8px; margin-left: 6px; }

.port {
  position: absolute;
  left: 50%;
  z-index: 1;
  width: 9px;
  height: 9px;
  margin-left: -5px;
  border: 2px solid #e8e8ea;
  border-radius: 50%;
  background: #111;
}
.port.in { top: -6px; }
.port.out { bottom: -6px; }

.api header { height: 40px; }
.api .badge { width: 25px; height: 25px; background: #3d5fe3; }
.tool-body { padding: 15px 17px; }
.tool {
  display: flex;
  align-items: center;
  gap: 5px;
  height: 28px;
  padding: 0 8px;
  border-radius: 6px;
  background: #222835;
  font-size: 11px;
  font-weight: 500;
}
.tool svg { color: #a5a8b0; }
.tool-tag {
  display: inline-flex;
  align-items: center;
  gap: 5px;
  height: 18px;
  margin-top: 10px;
  padding: 0 6px;
  border-radius: 9px;
  background: #16181a;
  color: var(--muted);
  font-size: 9px;
}
.tool-tag i { width: 5px; height: 5px; border-radius: 50%; background: #3d5fe3; }

.end { width: 249px; height: 110px; border: 2px solid #c4524d; background: #291514; }
.end .badge { background: #c93f2d; }
.end .slash { stroke: #c93f2d; }
.end .speech { padding: 25px 29px; }

.conv-global { width: 248px; border: 2px solid #2a2640; background: #281f42; }
.global-tag {
  display: flex;
  position: absolute;
  top: -24px;
  left: -2px;
  align-items: center;
  gap: 4px;
  height: 16px;
  padding: 0 7px;
  border-radius: 2px;
  background: #6c54cb;
  color: #f0edff;
  font-size: 9px;
  font-weight: 500;
  white-space: nowrap;
}

.cond {
  position: absolute;
  height: 32px;
  padding: 0 8px;
  border: 1px solid #56401a;
  border-radius: 12px;
  background: #382608;
  color: #ead02f;
  font-size: 11px;
  line-height: 30px;
  white-space: nowrap;
  transform: translate(-50%, -50%);
}
.cond-order { top: 418px; left: 1528px; }
.cond-yes { top: 454px; left: 2143px; }
.cond-done { top: 461px; left: 3371px; }
.cond-security { top: 725px; left: 1528px; }

.tools {
  display: flex;
  position: absolute;
  bottom: 14px;
  left: 50%;
  align-items: center;
  width: 385px;
  height: 45px;
  border: 1px solid #30363f;
  border-radius: 14px;
  background: #171717;
  color: #a3a7b3;
  transform: translateX(-46%);
}
.tools > button { width: 40px; height: 32px; }
.tools > span { width: 2px; height: 29px; margin: 0 5px; background: #1e1e1e; }
.modes { display: flex; border-radius: 12px; background: #232323; }
.modes button { width: 51px; height: 33px; border-radius: 12px; }
.modes .on { background: #393939; color: #fff; }

.minimap { position: absolute; right: 14px; bottom: 14px; width: 181px; height: 136px; }
```
